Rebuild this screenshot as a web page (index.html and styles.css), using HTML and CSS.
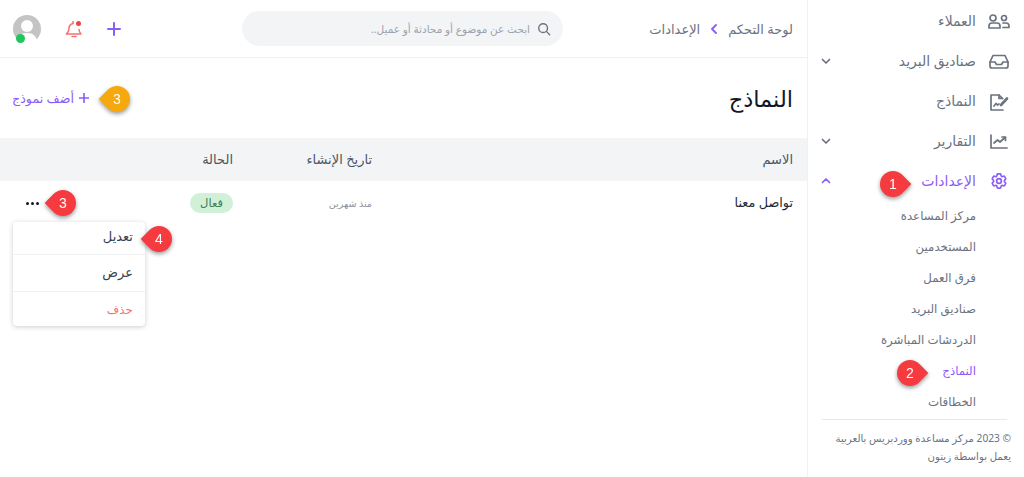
FILE: index.html
```html
<!DOCTYPE html>
<html lang="ar" dir="rtl">
<head>
    <meta charset="UTF-8">
    <meta name="viewport" content="width=device-width, initial-scale=1.0">
    <title>النماذج</title>
    <link rel="stylesheet" href="styles.css">
</head>
<body>
    <div class="app">
        <aside class="sidebar">
            <nav class="nav">
                <a class="nav-item">
                    <svg class="nav-icon" viewBox="0 0 22 22"><circle cx="5" cy="8" r="3"/><circle cx="16" cy="8" r="2.500"/><path d="M1 18v-2a3 3 0 0 1 3-3h5a3 3 0 0 1 3 3v2z"/><path d="M15 13h3a3 3 0 0 1 3 3v1.500h-6"/></svg>
                    <span>العملاء</span>
                </a>
                <a class="nav-item">
                    <svg class="nav-icon" viewBox="0 0 22 22"><path d="M2 12l3-6.500h12l3 6.500v4a2 2 0 0 1-2 2H4a2 2 0 0 1-2-2z"/><path d="M2 12h5l1.500 2.500h5L15 12h5"/></svg>
                    <span>صناديق البريد</span>
                    <svg class="chevron" viewBox="0 0 12 12"><path d="M2.500 4.500L6 8l3.500-3.500"/></svg>
                </a>
                <a class="nav-item">
                    <svg class="nav-icon" viewBox="0 0 22 22"><path d="M15 20H3V5h8l3.500 3.500"/><path d="M11 5v3.500h3.500"/><path d="M6 16l2-2.500 1.500 1.500 1.500-1"/><path class="thick" d="M13 15l6-6.500"/></svg>
                    <span>النماذج</span>
                </a>
                <a class="nav-item">
                    <svg class="nav-icon" viewBox="0 0 22 22"><path d="M3 5v13h16"/><path d="M6 13l3.500-3 2.500 2 5-4.500"/><path d="M14 7h3.500v3.500"/></svg>
                    <span>التقارير</span>
                    <svg class="chevron" viewBox="0 0 12 12"><path d="M2.500 4.500L6 8l3.500-3.500"/></svg>
                </a>
                <a class="nav-item active">
                    <svg class="nav-icon gear" viewBox="-2 -2 28 28"><path d="M9.594 3.940c.09-.542.56-.94 1.110-.94h2.593c.55 0 1.020.398 1.110.94l.213 1.281c.063.374.313.686.645.870.074.04.147.083.22.127.324.196.72.257 1.075.124l1.217-.456a1.125 1.125 0 011.370.49l1.296 2.247a1.125 1.125 0 01-.26 1.431l-1.003.827c-.293.24-.438.613-.431.992a6.759 6.759 0 010 .255c-.007.378.138.75.43.99l1.005.828c.424.35.534.954.26 1.430l-1.298 2.247a1.125 1.125 0 01-1.369.491l-1.217-.456c-.355-.133-.75-.072-1.076.124a6.570 6.570 0 01-.22.128c-.331.183-.581.495-.644.869l-.213 1.280c-.09.543-.56.941-1.110.941h-2.594c-.55 0-1.020-.398-1.110-.94l-.213-1.281c-.062-.374-.312-.686-.644-.87a6.520 6.520 0 01-.22-.127c-.325-.196-.72-.257-1.076-.124l-1.217.456a1.125 1.125 0 01-1.369-.49l-1.297-2.247a1.125 1.125 0 01.26-1.431l1.004-.827c.292-.24.437-.613.43-.992a6.932 6.932 0 010-.255c.007-.378-.138-.75-.43-.99l-1.004-.828a1.125 1.125 0 01-.26-1.430l1.297-2.247a1.125 1.125 0 011.370-.491l1.216.456c.356.133.751.072 1.076-.124.072-.044.146-.087.22-.128.332-.183.582-.495.644-.869l.214-1.281z"/><circle cx="12" cy="12" r="3"/></svg>
                    <span>الإعدادات</span>
                    <svg class="chevron" viewBox="0 0 12 12"><path d="M2.500 7.500L6 4l3.500 3.500"/></svg>
                </a>
            </nav>
            <ul class="subnav">
                <li>مركز المساعدة</li>
                <li>المستخدمين</li>
                <li>فرق العمل</li>
                <li>صناديق البريد</li>
                <li>الدردشات المباشرة</li>
                <li class="active">النماذج</li>
                <li>الخطافات</li>
            </ul>
            <footer class="copyright">
                <p>© 2023 مركز مساعدة ووردبريس بالعربية</p>
                <p>يعمل بواسطة زيتون</p>
            </footer>
        </aside>

        <main class="main">
            <header class="topbar">
                <div class="breadcrumb">
                    <span>لوحة التحكم</span>
                    <svg class="crumb-arrow" viewBox="0 0 6 10"><path d="M5 1L1 5l4 4"/></svg>
                    <span>الإعدادات</span>
                </div>
                <div class="search">
                    <svg class="search-icon" viewBox="0 0 16 16"><circle cx="7" cy="7" r="5"/><path d="M11 11l3.500 3.500"/></svg>
                    <span>ابحث عن موضوع أو محادثة أو عميل..</span>
                </div>
                <div class="top-actions">
                    <svg class="plus" viewBox="0 0 14 14"><path d="M7 1v12M1 7h12"/></svg>
                    <svg class="bell" viewBox="0 0 18 18"><path d="M1.500 14c1.500-1.500 2.500-3 2.500-5.500C4 5.500 5.500 4 8 3.500"/><path d="M8 3.500V1.500M14 9.500c.2 2 .8 3.300 2 4.500M1.500 14h14.500M7 16.500h4"/><circle class="dot" cx="13.500" cy="3.500" r="2.500"/></svg>
                    <div class="avatar">
                        <svg viewBox="0 0 28 28"><circle cx="14" cy="14" r="14" fill="#c4c4c4"/><circle cx="14" cy="11" r="6" fill="#fff"/><path d="M4 28c0-7 4-10 10-10s10 3 10 10z" fill="#fff"/></svg>
                        <span class="online"></span>
                    </div>
                </div>
            </header>

            <div class="page-head">
                <h1>النماذج</h1>
                <a class="add-link">
                    <svg class="add-plus" viewBox="0 0 10 10"><path d="M5 .5v9M.5 5h9"/></svg>
                    <span>أضف نموذج</span>
                </a>
            </div>

            <div class="table">
                <div class="table-head">
                    <div>الاسم</div>
                    <div>تاريخ الإنشاء</div>
                    <div>الحالة</div>
                </div>
                <div class="table-row">
                    <div class="name">تواصل معنا</div>
                    <div class="date">منذ شهرين</div>
                    <div class="status-cell">
                        <span class="badge">فعال</span>
                        <span class="dots"><i></i><i></i><i></i></span>
                    </div>
                </div>
            </div>

            <div class="menu">
                <div class="menu-item">تعديل</div>
                <div class="menu-item">عرض</div>
                <div class="menu-item danger">حذف</div>
            </div>
        </main>

        <div class="pin pin-right pin-1"><span>1</span></div>
        <div class="pin pin-right pin-2"><span>2</span></div>
        <div class="pin pin-left pin-amber pin-3a"><span>3</span></div>
        <div class="pin pin-left pin-3b"><span>3</span></div>
        <div class="pin pin-left pin-4"><span>4</span></div>
    </div>
</body>
</html>
```

FILE: styles.css
```css
* {
    box-sizing: border-box;
}

html, body {
    margin: 0;
    height: 100%;
}

body {
    font-family: "Noto Sans", "DejaVu Sans", sans-serif;
    color: #374151;
    background-color: #fff;
    overflow: hidden;
}

svg {
    fill: none;
    stroke: currentColor;
    stroke-linecap: round;
    stroke-linejoin: round;
}

.app {
    position: relative;
    display: flex;
    height: 477px;
}

/* sidebar */
.sidebar {
    width: 217px;
    flex-shrink: 0;
    border-left: 1px solid #f0f1f3;
    padding: 1px 14px 0 12px;
}

.nav-item {
    display: flex;
    align-items: center;
    gap: 12px;
    height: 40px;
    font-size: 14px;
    color: #6b7280;
}

.nav-item span {
    padding-bottom: 2px;
}

.nav-item.active {
    color: #8b5cf6;
}

.nav-icon {
    width: 22px;
    height: 22px;
    stroke-width: 1.7;
}

.nav-icon.gear {
    stroke-width: 2.100;
}

.nav-icon .thick {
    stroke-width: 2.600;
}

.chevron {
    width: 12px;
    height: 12px;
    margin-right: auto;
    stroke-width: 1.700;
}

.subnav {
    list-style: none;
    margin: 0;
    padding: 0 34px 0 0;
}

.subnav li {
    height: 31px;
    line-height: 29px;
    font-size: 11.800px;
    color: #6b7280;
}

.subnav li.active {
    color: #8b5cf6;
}

.copyright {
    margin: 1px 3px 0 2px;
    border-top: 1px solid #e8e9ec;
    padding-top: 9px;
    font-size: 10.200px;
    color: #6b7280;
}

.copyright p {
    margin: 0 -4px 0 0;
    line-height: 18px;
    white-space: nowrap;
}

/* main */
.main {
    position: relative;
    flex: 1;
    min-width: 0;
}

.topbar {
    display: flex;
    align-items: center;
    height: 58px;
    border-bottom: 1px solid #f0f1f3;
    padding: 0 14px 0 13px;
}

.breadcrumb {
    display: flex;
    align-items: center;
    gap: 11px;
    width: 230px;
    flex-shrink: 0;
    font-size: 13px;
    color: #6b7280;
}

.crumb-arrow {
    width: 6px;
    height: 10px;
    color: #8b5cf6;
    stroke-width: 1.800;
}

.search {
    display: flex;
    align-items: center;
    gap: 7px;
    width: 321px;
    height: 35px;
    padding: 0 12px;
    border-radius: 18px;
    background-color: #f3f4f6;
    font-size: 10.500px;
    color: #9ca3af;
}

.search-icon {
    width: 14px;
    height: 14px;
    color: #6b7280;
    stroke-width: 1.600;
}

.top-actions {
    display: flex;
    align-items: center;
    gap: 24px;
    margin-right: auto;
}

.plus {
    width: 14px;
    height: 14px;
    color: #8b5cf6;
    stroke-width: 2;
}

.bell {
    width: 18px;
    height: 18px;
    color: #f87171;
    stroke-width: 1.500;
}

.bell .dot {
    fill: #ef4444;
    stroke: none;
}

.avatar {
    position: relative;
    width: 28px;
    height: 28px;
}

.avatar svg {
    display: block;
    width: 28px;
    height: 28px;
    stroke: none;
}

.online {
    position: absolute;
    left: 3px;
    bottom: 0;
    width: 9px;
    height: 9px;
    border-radius: 50%;
    background-color: #22c55e;
}

.page-head {
    display: flex;
    align-items: center;
    justify-content: space-between;
    height: 80px;
    padding: 0 14px 0 12px;
}

.page-head h1 {
    margin: 0;
    font-size: 22.500px;
    font-weight: 400;
    color: #111827;
}

.add-link {
    display: flex;
    align-items: center;
    gap: 5px;
    font-size: 12.700px;
    color: #8b5cf6;
}

.add-plus {
    width: 10px;
    height: 10px;
    stroke-width: 1.600;
}

/* table */
.table-head, .table-row {
    display: grid;
    grid-template-columns: 421px 139px 1fr;
    align-items: center;
    padding-right: 14px;
}

.table-head {
    height: 43px;
    padding-bottom: 2px;
    background-color: #f3f4f6;
    font-size: 13px;
    color: #4b5563;
}

.table-row {
    height: 44px;
}

.name {
    padding-bottom: 2px;
    font-size: 12.800px;
    color: #1f2937;
}

.date {
    font-size: 9.600px;
    color: #8b919c;
}

.status-cell {
    display: flex;
    align-items: center;
    justify-content: space-between;
    padding-left: 26px;
}

.badge {
    width: 43px;
    height: 20px;
    line-height: 20px;
    border-radius: 10px;
    text-align: center;
    font-size: 11.500px;
    color: #3f7d55;
    background-color: #d1f0d8;
}

.dots {
    display: flex;
    gap: 2px;
}

.dots i {
    width: 3px;
    height: 3px;
    border-radius: 50%;
    background-color: #111827;
}

.menu {
    position: absolute;
    top: 222px;
    left: 13px;
    width: 132px;
    height: 104px;
    border-radius: 4px;
    background-color: #fff;
    box-shadow: 0 1px 5px rgba(0, 0, 0, 0.2);
}

.menu-item {
    height: 37px;
    line-height: 35px;
    padding: 0 12px;
    font-size: 13px;
    color: #374151;
    border-bottom: 1px solid #f0f1f3;
}

.menu-item:first-child {
    height: 33px;
    line-height: 29px;
}

.menu-item.danger {
    height: 34px;
    font-size: 12px;
    color: #f87171;
    border-bottom: 0;
}

/* numbered annotation markers */
.pin {
    position: absolute;
    width: 26px;
    height: 26px;
    filter: drop-shadow(0 2px 2px rgba(0, 0, 0, 0.4));
}

.pin::before {
    content: "";
    position: absolute;
    inset: 0;
    background-color: #f53b3f;
    border-radius: 50% 50% 0 50%;
}

.pin-right::before {
    transform: rotate(-45deg);
}

.pin-left::before {
    transform: rotate(135deg);
}

.pin-amber::before {
    background-color: #f5a90f;
}

.pin span {
    position: relative;
    display: block;
    text-align: center;
    line-height: 26px;
    font-family: "Liberation Sans", sans-serif;
    font-size: 14px;
    color: #fff;
}

.pin-1 { top: 171px; left: 880px; }
.pin-2 { top: 360px; left: 897px; }
.pin-3a { top: 86px; left: 104px; }
.pin-3b { top: 190px; left: 50px; }
.pin-4 { top: 226px; left: 146px; }
```
